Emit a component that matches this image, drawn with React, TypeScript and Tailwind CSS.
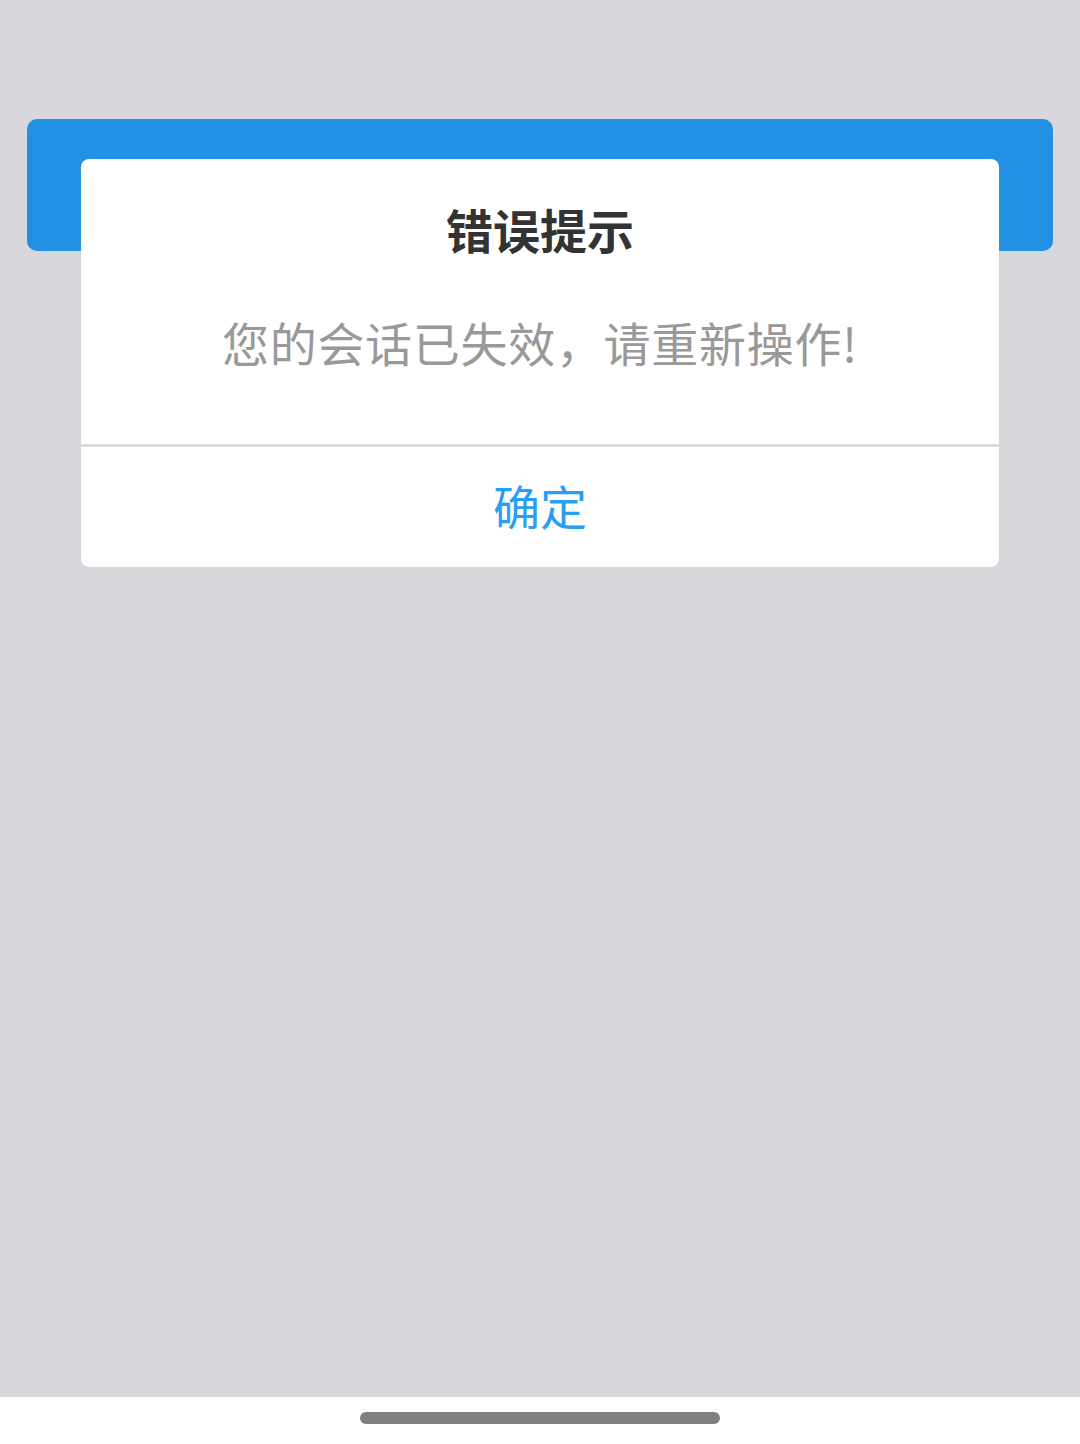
export default function App() {
  return (
    <div className="relative flex h-[1444px] flex-col bg-[#d8d7dc] font-['Noto_Sans_CJK_SC',sans-serif]">
      <div className="flex-1 px-[27px] pt-[119px]">
        <div className="h-[132px] rounded-[10px] bg-[#2290e3]" />
      </div>
      <div className="flex h-[47px] items-start justify-center bg-white pt-[15px]">
        <div className="h-[12px] w-[360px] rounded-full bg-[#808080]" />
      </div>

      <div className="absolute left-[81px] top-[159px] w-[918px] overflow-hidden rounded-[8px] bg-white">
        <div className="pb-[75px] pt-[43px] text-center">
          <p className="text-[47px] font-bold leading-[54px] text-[#333333]">错误提示</p>
          <p className="mt-[59px] text-[47px] leading-[54px] tracking-[0.7px] text-[#999999]">您的会话已失效，请重新操作!</p>
        </div>
        <div className="h-[3px] bg-[#dcdcdc]" />
        <button type="button" className="flex h-[120px] w-full items-center justify-center pb-[4px] text-[47px] text-[#2a9df4]">
          确定
        </button>
      </div>
    </div>
  );
}
